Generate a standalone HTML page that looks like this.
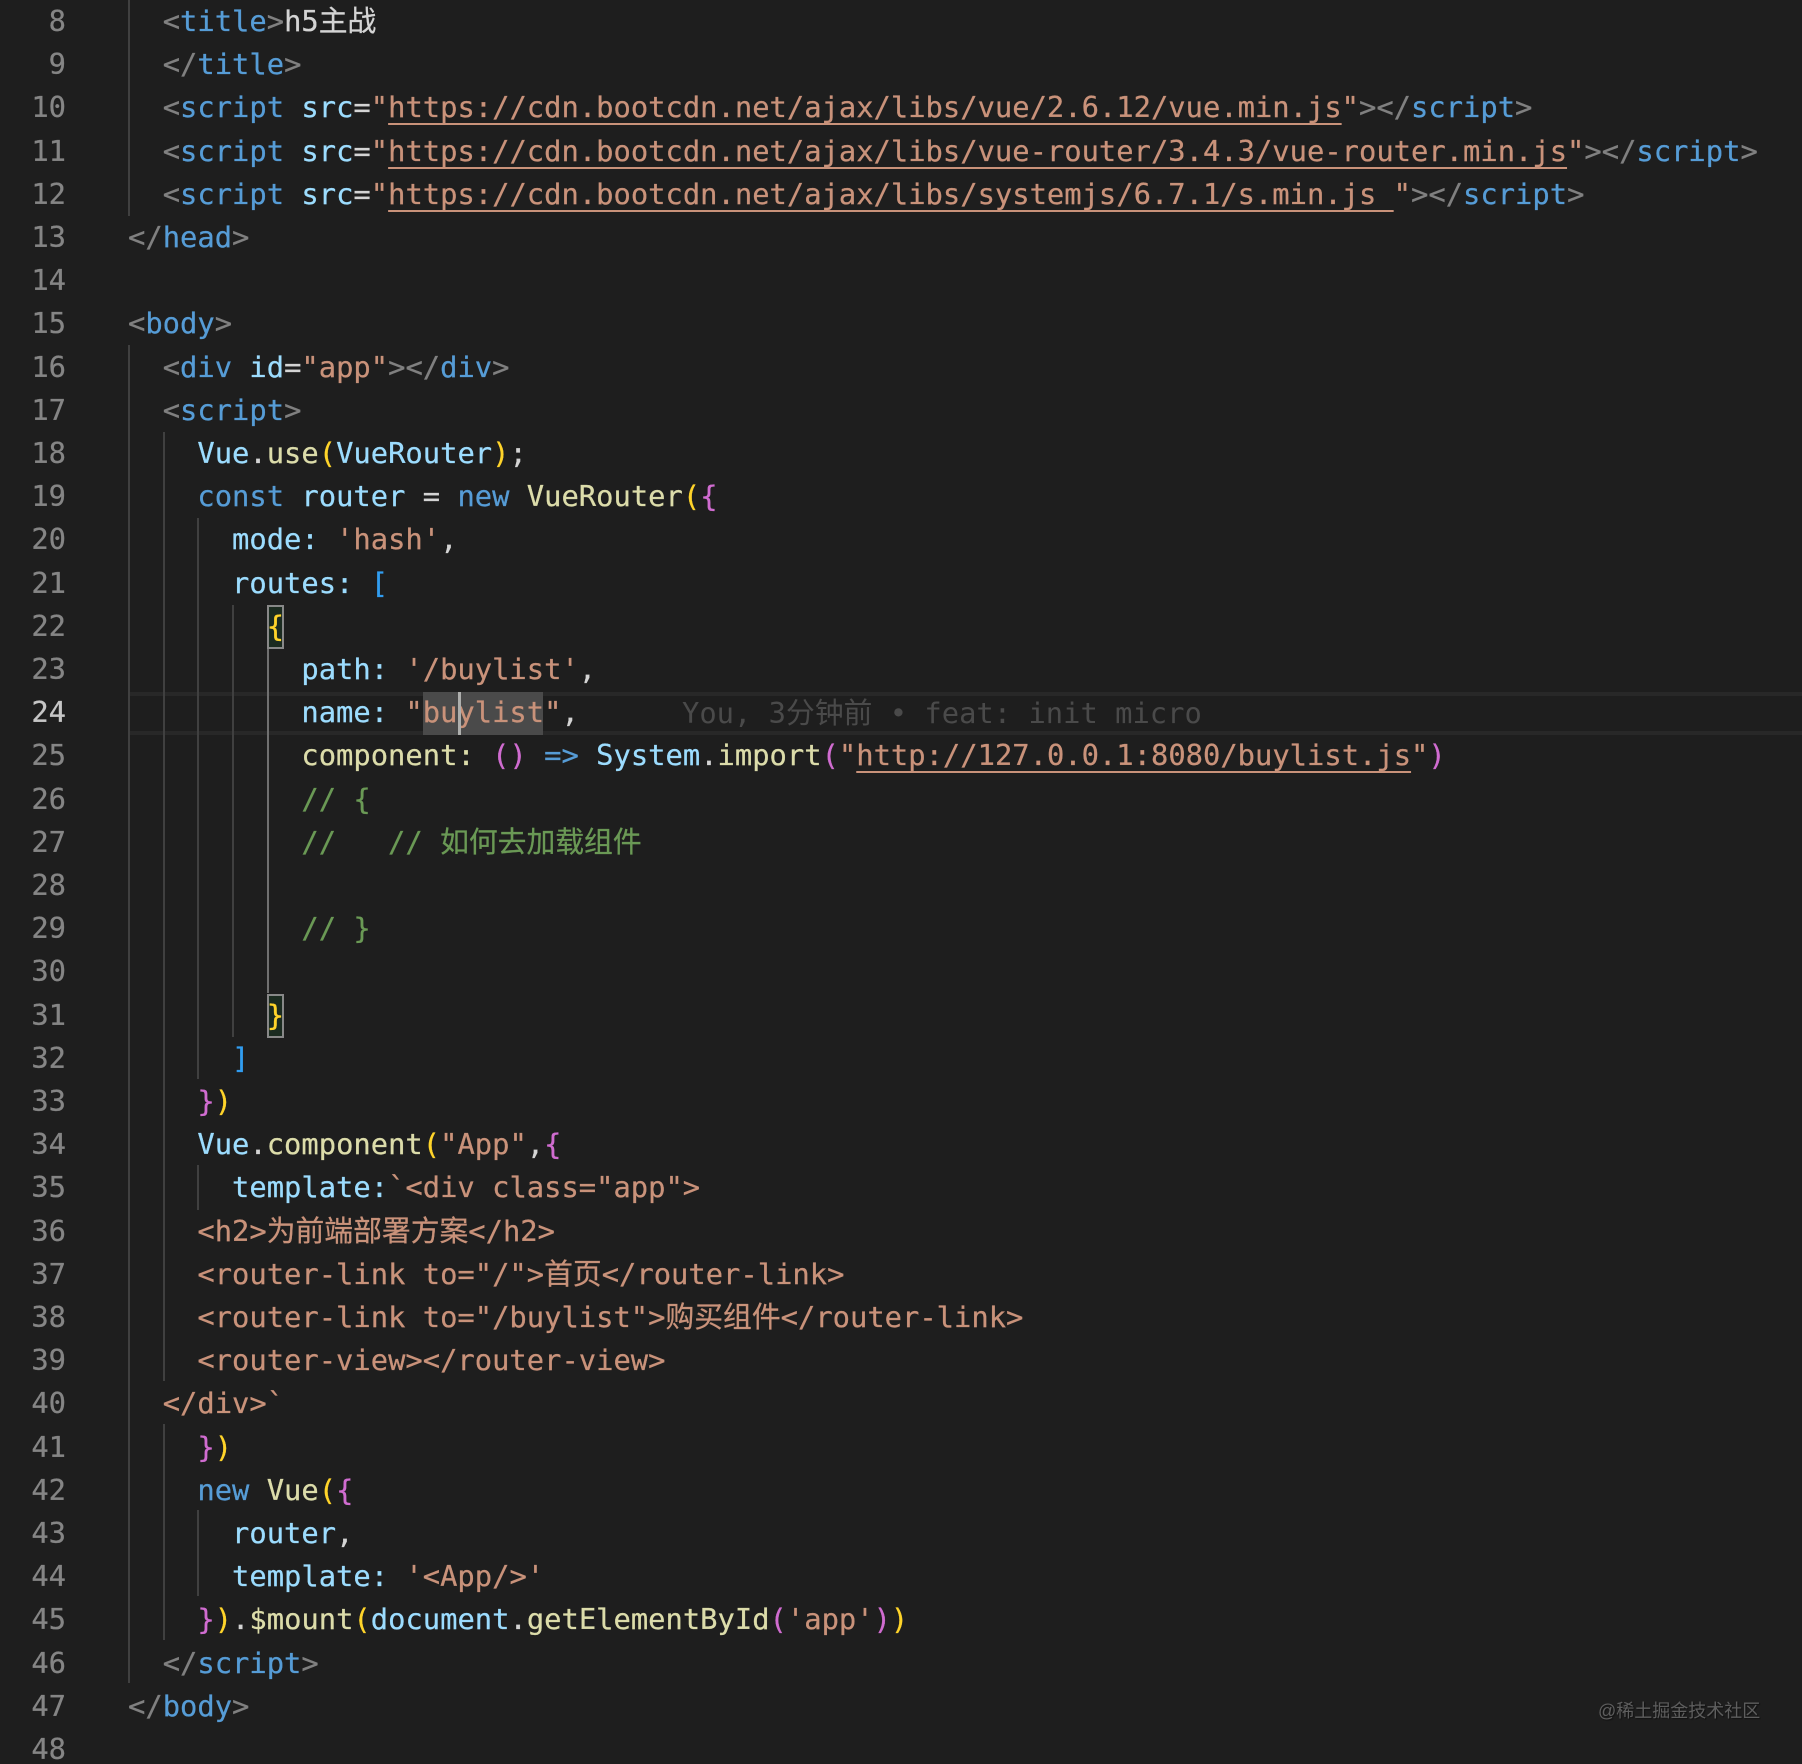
<!DOCTYPE html>
<html lang="zh">
<head>
<meta charset="utf-8">
<title>h5主战</title>
<style>
html,body{margin:0;padding:0;background:#1e1e1e;}
#e{position:relative;width:1802px;height:1764px;overflow:hidden;background:#1e1e1e;font-family:"DejaVu Sans Mono","Liberation Mono","Noto Sans CJK SC",monospace;font-size:28.8px;font-kerning:none;font-variant-ligatures:none;}
.l,.n{position:absolute;top:calc(var(--n)*43.2px);height:43.2px;line-height:43.2px;white-space:pre;-webkit-text-stroke:0.25px currentColor;}
.l{left:128px;color:#d4d4d4;}
.n{left:0;width:66px;text-align:right;color:#858585;}
.p{color:#808080}.t{color:#569cd6}.a{color:#9cdcfe}.s{color:#c9927a}.f{color:#dcdcaa}
.y{color:#ffd42a}.k{color:#d06cd0}.b{color:#319df0}.c{color:#6a9955}
.u{color:#c9927a;text-decoration:underline;text-decoration-thickness:2px;text-underline-offset:6px;text-decoration-skip-ink:none;}
.g{position:absolute;width:2px;background:#404040;}
.ga{background:#707070;}
#hl{position:absolute;left:129px;right:0;top:692px;height:35px;border-top:4px solid #282828;border-bottom:4px solid #282828;}
#sel{position:absolute;left:423px;top:692px;width:120px;height:43px;background:#4a4a4a;}
#cur{position:absolute;left:458px;top:692px;width:3px;height:43px;background:#aeafad;}
.br{position:absolute;left:267px;width:13px;height:40px;background:#1b2b20;border:2px solid #888;}
#bl{position:absolute;left:682px;top:692px;line-height:43.2px;white-space:pre;color:#4a4a4a;}
#wm{position:absolute;left:1598px;top:1699px;line-height:24px;font-family:"Liberation Sans","Noto Sans CJK SC",sans-serif;font-size:18px;color:#5e5e5e;text-shadow:1px 1px 1px #111;white-space:pre;}
</style>
</head>
<body>
<div id="e">
<div id="hl"></div>
<div class="g" style="left:128px;top:0;height:216px"></div>
<div class="g" style="left:128px;top:345px;height:1338px"></div>
<div class="g" style="left:163px;top:432px;height:949px"></div>
<div class="g" style="left:163px;top:1424px;height:216px"></div>
<div class="g" style="left:197px;top:518px;height:561px"></div>
<div class="g" style="left:197px;top:1165px;height:45px"></div>
<div class="g" style="left:197px;top:1510px;height:86px"></div>
<div class="g" style="left:232px;top:605px;height:432px"></div>
<div class="g ga" style="left:267px;top:648px;height:345px"></div>
<div id="sel"></div>
<div class="br" style="top:605px"></div>
<div class="br" style="top:994px"></div>

<div class="n" style="--n:0">8</div>
<div class="n" style="--n:1">9</div>
<div class="n" style="--n:2">10</div>
<div class="n" style="--n:3">11</div>
<div class="n" style="--n:4">12</div>
<div class="n" style="--n:5">13</div>
<div class="n" style="--n:6">14</div>
<div class="n" style="--n:7">15</div>
<div class="n" style="--n:8">16</div>
<div class="n" style="--n:9">17</div>
<div class="n" style="--n:10">18</div>
<div class="n" style="--n:11">19</div>
<div class="n" style="--n:12">20</div>
<div class="n" style="--n:13">21</div>
<div class="n" style="--n:14">22</div>
<div class="n" style="--n:15">23</div>
<div class="n" style="--n:16;color:#c6c6c6">24</div>
<div class="n" style="--n:17">25</div>
<div class="n" style="--n:18">26</div>
<div class="n" style="--n:19">27</div>
<div class="n" style="--n:20">28</div>
<div class="n" style="--n:21">29</div>
<div class="n" style="--n:22">30</div>
<div class="n" style="--n:23">31</div>
<div class="n" style="--n:24">32</div>
<div class="n" style="--n:25">33</div>
<div class="n" style="--n:26">34</div>
<div class="n" style="--n:27">35</div>
<div class="n" style="--n:28">36</div>
<div class="n" style="--n:29">37</div>
<div class="n" style="--n:30">38</div>
<div class="n" style="--n:31">39</div>
<div class="n" style="--n:32">40</div>
<div class="n" style="--n:33">41</div>
<div class="n" style="--n:34">42</div>
<div class="n" style="--n:35">43</div>
<div class="n" style="--n:36">44</div>
<div class="n" style="--n:37">45</div>
<div class="n" style="--n:38">46</div>
<div class="n" style="--n:39">47</div>
<div class="n" style="--n:40">48</div>

<div class="l" style="--n:0">  <span class="p">&lt;</span><span class="t">title</span><span class="p">&gt;</span>h5主战</div>
<div class="l" style="--n:1">  <span class="p">&lt;/</span><span class="t">title</span><span class="p">&gt;</span></div>
<div class="l" style="--n:2">  <span class="p">&lt;</span><span class="t">script</span> <span class="a">src</span>=<span class="s">"</span><span class="u">https://cdn.bootcdn.net/ajax/libs/vue/2.6.12/vue.min.js</span><span class="s">"</span><span class="p">&gt;&lt;/</span><span class="t">script</span><span class="p">&gt;</span></div>
<div class="l" style="--n:3">  <span class="p">&lt;</span><span class="t">script</span> <span class="a">src</span>=<span class="s">"</span><span class="u">https://cdn.bootcdn.net/ajax/libs/vue-router/3.4.3/vue-router.min.js</span><span class="s">"</span><span class="p">&gt;&lt;/</span><span class="t">script</span><span class="p">&gt;</span></div>
<div class="l" style="--n:4">  <span class="p">&lt;</span><span class="t">script</span> <span class="a">src</span>=<span class="s">"</span><span class="u">https://cdn.bootcdn.net/ajax/libs/systemjs/6.7.1/s.min.js </span><span class="s">"</span><span class="p">&gt;&lt;/</span><span class="t">script</span><span class="p">&gt;</span></div>
<div class="l" style="--n:5"><span class="p">&lt;/</span><span class="t">head</span><span class="p">&gt;</span></div>
<div class="l" style="--n:7"><span class="p">&lt;</span><span class="t">body</span><span class="p">&gt;</span></div>
<div class="l" style="--n:8">  <span class="p">&lt;</span><span class="t">div</span> <span class="a">id</span>=<span class="s">"app"</span><span class="p">&gt;&lt;/</span><span class="t">div</span><span class="p">&gt;</span></div>
<div class="l" style="--n:9">  <span class="p">&lt;</span><span class="t">script</span><span class="p">&gt;</span></div>
<div class="l" style="--n:10">    <span class="a">Vue</span>.<span class="f">use</span><span class="y">(</span><span class="a">VueRouter</span><span class="y">)</span>;</div>
<div class="l" style="--n:11">    <span class="t">const</span> <span class="a">router</span> = <span class="t">new</span> <span class="f">VueRouter</span><span class="y">(</span><span class="k">{</span></div>
<div class="l" style="--n:12">      <span class="a">mode:</span> <span class="s">'hash'</span>,</div>
<div class="l" style="--n:13">      <span class="a">routes:</span> <span class="b">[</span></div>
<div class="l" style="--n:14">        <span class="y">{</span></div>
<div class="l" style="--n:15">          <span class="a">path:</span> <span class="s">'/buylist'</span>,</div>
<div class="l" style="--n:16">          <span class="a">name:</span> <span class="s">"buylist"</span>,</div>
<div class="l" style="--n:17">          <span class="f">component:</span> <span class="k">()</span> <span class="t">=&gt;</span> <span class="a">System</span>.<span class="f">import</span><span class="k">(</span><span class="s">"</span><span class="u">http://127.0.0.1:8080/buylist.js</span><span class="s">"</span><span class="k">)</span></div>
<div class="l" style="--n:18">          <span class="c">// {</span></div>
<div class="l" style="--n:19">          <span class="c">//   // 如何去加载组件</span></div>
<div class="l" style="--n:21">          <span class="c">// }</span></div>
<div class="l" style="--n:23">        <span class="y">}</span></div>
<div class="l" style="--n:24">      <span class="b">]</span></div>
<div class="l" style="--n:25">    <span class="k">}</span><span class="y">)</span></div>
<div class="l" style="--n:26">    <span class="a">Vue</span>.<span class="f">component</span><span class="y">(</span><span class="s">"App"</span>,<span class="k">{</span></div>
<div class="l" style="--n:27">      <span class="a">template:</span><span class="s">`&lt;div class="app"&gt;</span></div>
<div class="l" style="--n:28">    <span class="s">&lt;h2&gt;为前端部署方案&lt;/h2&gt;</span></div>
<div class="l" style="--n:29">    <span class="s">&lt;router-link to="/"&gt;首页&lt;/router-link&gt;</span></div>
<div class="l" style="--n:30">    <span class="s">&lt;router-link to="/buylist"&gt;购买组件&lt;/router-link&gt;</span></div>
<div class="l" style="--n:31">    <span class="s">&lt;router-view&gt;&lt;/router-view&gt;</span></div>
<div class="l" style="--n:32">  <span class="s">&lt;/div&gt;`</span></div>
<div class="l" style="--n:33">    <span class="k">}</span><span class="y">)</span></div>
<div class="l" style="--n:34">    <span class="t">new</span> <span class="f">Vue</span><span class="y">(</span><span class="k">{</span></div>
<div class="l" style="--n:35">      <span class="a">router</span>,</div>
<div class="l" style="--n:36">      <span class="a">template:</span> <span class="s">'&lt;App/&gt;'</span></div>
<div class="l" style="--n:37">    <span class="k">}</span><span class="y">)</span>.<span class="f">$mount</span><span class="y">(</span><span class="a">document</span>.<span class="f">getElementById</span><span class="k">(</span><span class="s">'app'</span><span class="k">)</span><span class="y">)</span></div>
<div class="l" style="--n:38">  <span class="p">&lt;/</span><span class="t">script</span><span class="p">&gt;</span></div>
<div class="l" style="--n:39"><span class="p">&lt;/</span><span class="t">body</span><span class="p">&gt;</span></div>

<div id="cur"></div>
<div id="bl">You, 3分钟前 • feat: init micro</div>
<div id="wm">@稀土掘金技术社区</div>
</div>
</body>
</html>
